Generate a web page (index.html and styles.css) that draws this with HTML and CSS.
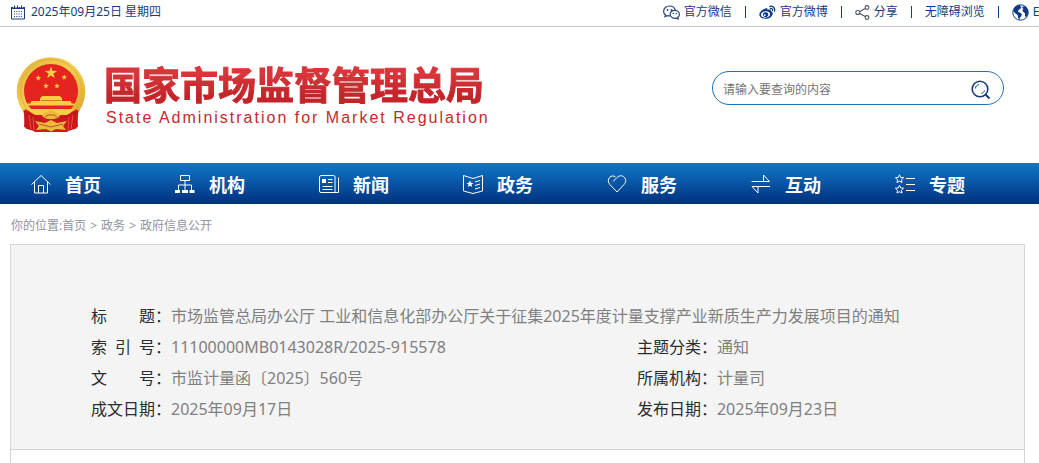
FILE: index.html
```
<!DOCTYPE html>
<html lang="zh-CN">
<head>
<meta charset="utf-8">
<title>国家市场监督管理总局</title>
<link rel="stylesheet" href="styles.css">
</head>
<body>
<div class="topbar">
  <div class="date">
    <svg width="14" height="15" viewBox="0 0 14 15" fill="none" stroke="#1c3c78"><path d="M.5 3.500v10.500h13V3.500M3.500 .5v3.500M6.500 .5v3.500M10.500 .5v3.500"/><path d="M0 2.500h2.500M4.500 2.500h1M7.500 2.500h2M11.500 2.500H14M0 3.500h14"/><path d="M3 6.500h9M3 9h9M3 11.500h9" stroke-dasharray="1 1.300"/></svg>
    <span>2025年09月25日 星期四</span>
  </div>
  <ul class="toplinks">
    <li><a href="#"><svg width="17" height="15" viewBox="0 0 17 15" fill="none" stroke="#24457f" stroke-width="1.200"><path d="M7 10.800c-1 .2-2 .1-3-.2L2 11.600l.4-1.800C1.200 9 .6 7.700.6 6.200.600 3.300 3.300 1 6.500 1c3 0 5.400 1.900 5.800 4.300"/><path d="M11.700 5.300c2.600 0 4.700 1.800 4.700 4 0 1.300-.6 2.300-1.600 3l.4 1.600-1.700-.8c-3.300.9-6.400-1-6.400-3.800 0-2.200 2-4 4.600-4z"/><g fill="#24457f" stroke="none"><circle cx="4.500" cy="5" r=".9"/><circle cx="8.500" cy="5" r=".9"/><circle cx="10.300" cy="8.500" r=".8"/><circle cx="13.300" cy="8.500" r=".8"/></g></svg>官方微信</a></li>
    <li><a href="#"><svg width="17" height="15" viewBox="0 0 17 15"><path fill="#0c3b83" fill-rule="evenodd" d="M6.500 3.500c1.300-.5 2.300 0 2 1.300 1.900-.7 3.700-.4 3.200 1.300 1.300.4 2 1.300 2 2.300 0 2.800-3.200 5.400-7.200 5.400C3 13.800.3 12 .3 9.500.300 7.200 3.500 4.300 6.500 3.500zM6.400 6.300C3.700 6.500 1.800 8 2 9.900s2.200 2.900 4.700 2.700c2.600-.2 4.600-1.800 4.400-3.700S9 6.100 6.400 6.300zM6.300 7.200c1.900-.2 3.200.9 3 2.500s-1.600 2.500-3.200 2.300c-1.700-.2-2.700-1.400-2.300-2.800.3-1.200 1.300-1.900 2.500-2z"/><circle cx="5.600" cy="10.200" r="1" fill="#fff"/><path d="M10.800 1.300c3-.7 5.600 1.800 4.700 4.900M11.400 3.500c1.500-.3 2.500.7 2.100 2.100" fill="none" stroke="#0c3b83" stroke-width="1.300" stroke-linecap="round"/></svg>官方微博</a></li>
    <li><a href="#"><svg width="15" height="15" viewBox="0 0 15 15" fill="none" stroke="#4d545f" stroke-width="1.100"><circle cx="2.800" cy="7.500" r="2"/><circle cx="12" cy="2.500" r="1.900"/><circle cx="12" cy="12.500" r="1.900"/><path d="M4.700 6.500l5.500-2.900M4.700 8.500l5.500 2.900"/></svg>分享</a></li>
    <li><a href="#">无障碍浏览</a></li>
    <li><a href="#"><svg width="17" height="17" viewBox="0 0 17 17"><circle cx="8.500" cy="8.500" r="7.700" fill="#fff" stroke="#0c3b83"/><path fill="#0c3b83" d="M2 4.300L5 1.500l3.500-.7-.5 1.500 1.500.5-.8 1.800-2 1.200-.8 2 2 .6 2 1.600-.8 2.500-1.200 1-.3 2.500-1.400-1.800-.4-3L3.600 9.600 1.400 7.500zM10.500 2.500l3-.2 2.300 3.200.5 3-.8 3.200-1.500 1.500-1.100-1.800.2-2.200-1.800-1.200-1-1.700L11.500 5l-1.200-1z"/></svg>English</a></li>
  </ul>
</div>

<header class="header">
  <a class="brand" href="#">
    <svg width="70" height="76" viewBox="0 0 70 76">
      <defs><linearGradient id="gold" x1="0" y1="0" x2="1" y2="1"><stop offset="0" stop-color="#dfae3a"/><stop offset=".45" stop-color="#f5d050"/><stop offset="1" stop-color="#d99f2b"/></linearGradient></defs>
      <circle cx="35" cy="34.500" r="34.300" fill="url(#gold)"/>
      <circle cx="35" cy="33" r="30.500" fill="none" stroke="#e2b13c"/>
      <circle cx="35" cy="34" r="27" fill="#e52420"/>
      <path fill="#cf1c20" d="M9 52l11 6h30l11-6 1 18-8 2-3 3H19l-3-3-8-2z"/>
      <g fill="#f6cf45">
        <path id="star" d="M35 9.500l1.500 4.300 4.600.1-3.700 2.800 1.400 4.400-3.800-2.600-3.800 2.600 1.400-4.400-3.700-2.800 4.600-.1z"/>
        <use href="#star" transform="translate(5.800 13.500) scale(.47)"/>
        <use href="#star" transform="translate(31.800 12.800) scale(.47)"/>
        <use href="#star" transform="translate(13.500 21.500) scale(.47)"/>
        <use href="#star" transform="translate(24.500 21.500) scale(.47)"/>
        <path d="M26 39h18l1.500 2H46v3h8.500l1.500 3h-42l1.500-3H24v-3h.5z"/>
        <path d="M11.500 46.500h47v2h-47z"/>
        <path d="M11.500 52h47L52 58H18z"/>
      </g>
      <path d="M25 43.500h20" stroke="#d87625" fill="none"/>
      <path fill="#c9181c" d="M7.500 53l17 7 3 5-6 10-7-2-5-1.500zM62.500 53l-17 7-3 5 6 10 7-2 5-1.500z"/>
      <path fill="#edbb3b" d="M31 55l3-1.500h2l3 1.500 3 1 2 3-3 2-3 1h-6l-3-1-3-2 2-3zM19 64l10 2 6-3 6 3 10-2-4 5 3 4-10-1-5 2.500-5-2.500-10 1 3-4z"/>
      <path d="M29 60l3-2h6l3 2M23 67l12 3 12-3" stroke="#bd5823" fill="none"/>
      <path d="M13 58l2 14M17 60l1 13M57 58l-2 14M53 60l-1 13" stroke="#f04a38" fill="none"/>
    </svg>
    <span class="names">
      <span class="name-cn">国家市场监督管理总局</span>
      <span class="name-en">State Administration for Market Regulation</span>
    </span>
  </a>
  <form class="search">
    <input class="search-input" type="text" aria-label="搜索" placeholder="请输入要查询的内容">
    <button class="search-btn" type="button" aria-label="查询"><svg width="20" height="20" viewBox="0 0 20 20" fill="none" stroke="#143d80"><circle cx="9" cy="9" r="7.800" stroke-width="1.600"/><path d="M14.500 14.500l4 4" stroke-width="2"/><path d="M4.300 8.500c.3-2 1.700-3.500 3.700-4M13.500 10.500c-.5 1.500-1.500 2.500-3 3"/></svg></button>
  </form>
</header>

<nav class="nav">
  <a href="#"><svg width="20" height="20" viewBox="0 0 20 20"><path d="M.5 10.500l9.500-9 9.500 9M3.500 8v11h13V8M7.500 19v-7.500h5V19"/></svg>首页</a>
  <a href="#"><svg width="20" height="20" viewBox="0 0 20 20"><path d="M5.500 1.500h9v5h-9zM10 6.500v4.500M3.500 16v-5h13v5M10 11v5"/><path class="solid" d="M0 16h5v3H0zM7 16h6v3H7zM14.500 16h5v3h-5z"/></svg>机构</a>
  <a href="#"><svg width="20" height="20" viewBox="0 0 20 20"><path d="M2.500 1.500h12q1.500 0 1.500 1.500v15.500H2q-1.500 0-1.500-1.500V3q0-1.500 2-1.500zM16 18.500h3.500v-15M9 5.500h4.500M9 8.500h4.500M3.500 12.500h10M3.500 15.500h10"/><path class="solid" d="M3 5h4v4H3z"/></svg>新闻</a>
  <a href="#"><svg width="20" height="20" viewBox="0 0 20 20"><path d="M.5 1.500l9.500 3 9.500-3V17L10 19.500.5 17zM12 8l5-1.500M12 11.500l5-1.500M12 15l5-1.500"/><path class="solid" d="M7 6.500l1 2.300 2.500.2-2 1.500.7 2.500L7 11.700 4.800 13l.7-2.500-2-1.500 2.500-.2z"/></svg>政务</a>
  <a href="#"><svg width="20" height="20" viewBox="0 0 20 20"><path d="M6 7.500l4-4c2.200-2.200 5.300-2.300 7.200-.3 2 2 2 5-.1 7.200L10 18 2.800 10.400C.8 8.300.8 5.200 2.700 3.300c1.700-1.700 4-1.700 5.800-.4"/></svg>服务</a>
  <a href="#"><svg width="20" height="20" viewBox="0 0 20 20"><path d="M.5 7.500h18L12.500 1v6.500M19 12.500H1L7 19v-6.500"/></svg>互动</a>
  <a href="#"><svg width="20" height="20" viewBox="0 0 20 20"><path d="M4.500.8l1.200 2.600 2.900.3-2.100 2 .5 2.800-2.500-1.300L2 8.500l.5-2.800-2.100-2 2.900-.3zM4.500 11.300l1.200 2.600 2.900.3-2.100 2 .5 2.800-2.500-1.300L2 19l.5-2.800-2.100-2 2.900-.3zM11 4.500h9M11 10.500h9M11 16.500h9"/></svg>专题</a>
</nav>

<main class="page">
  <div class="crumbs">你的位置:<a href="#">首页</a><span class="gt">&gt;</span><a href="#">政务</a><span class="gt">&gt;</span><a href="#">政府信息公开</a></div>
  <article class="doc">
    <dl class="meta">
      <div class="row wide"><dt><span class="label">标 题</span>：</dt><dd>市场监管总局办公厅 工业和信息化部办公厅关于征集2025年度计量支撑产业新质生产力发展项目的通知</dd></div>
      <div class="row"><dt><span class="label">索 引 号</span>：</dt><dd>11100000MB0143028R/2025-915578</dd></div>
      <div class="row"><dt><span class="label">主题分类</span>：</dt><dd>通知</dd></div>
      <div class="row"><dt><span class="label">文 号</span>：</dt><dd>市监计量函〔2025〕560号</dd></div>
      <div class="row"><dt><span class="label">所属机构</span>：</dt><dd>计量司</dd></div>
      <div class="row"><dt><span class="label">成文日期</span>：</dt><dd>2025年09月17日</dd></div>
      <div class="row"><dt><span class="label">发布日期</span>：</dt><dd>2025年09月23日</dd></div>
    </dl>
    <div class="doc-body"></div>
  </article>
</main>
</body>
</html>
```
FILE: styles.css
```
* { box-sizing: border-box; }
body {
  margin: 0;
  overflow-x: hidden;
  background: #fff;
  font-family: "Noto Sans", "Noto Sans CJK SC", sans-serif;
  font-size: 12px;
  color: #333;
}
a { color: inherit; text-decoration: none; }
svg { display: block; flex: none; }
ul, dl, dd { margin: 0; padding: 0; list-style: none; }

.topbar {
  display: flex;
  align-items: center;
  height: 27px;
  padding: 0 0 2px 11px;
  overflow: hidden;
  border-bottom: 1px solid #c4c6ca;
  color: #143d80;
  line-height: 22px;
  white-space: nowrap;
}
.date { display: flex; align-items: center; gap: 6px; flex: 0 0 63%; }
.toplinks { display: flex; gap: 13px; margin-left: 4px; }
.toplinks li { display: flex; align-items: center; gap: 13px; }
.toplinks li + li::before { content: ""; width: 1px; height: 12px; background: #143d80; }
.toplinks a { display: flex; align-items: center; gap: 4px; }

.header {
  display: flex;
  align-items: center;
  justify-content: space-between;
  height: 136px;
  padding: 0 35px 0 16px;
}
.brand { display: flex; align-items: center; gap: 18px; }
.names { display: flex; flex-direction: column; white-space: nowrap; }
.name-cn {
  font: bold 38px/44px "Noto Sans CJK SC", sans-serif;
  background: linear-gradient(#d9353a 30%, #c2242a 80%);
  background-clip: text;
  color: transparent;
  -webkit-text-stroke: 1px transparent;
}
.name-en {
  padding: 2px 0 0 2px;
  font: 16px/22px "Liberation Sans", sans-serif;
  letter-spacing: 2px;
  color: #c4292d;
}
.search {
  display: flex;
  align-items: center;
  width: 292px;
  height: 34px;
  margin-bottom: 15px;
  padding: 0 12px 0 10px;
  border: 1px solid #1f72b8;
  border-radius: 17px;
}
.search-input {
  flex: 1;
  min-width: 0;
  padding: 3px 0 0;
  border: 0;
  outline: 0;
  background: none;
  font: inherit;
}
.search-input::placeholder { color: #757575; }
.search-btn { padding: 4px 0 0; border: 0; background: none; }

.nav {
  display: flex;
  height: 41px;
  padding-left: 31px;
  background: linear-gradient(#1078c8, #00307e);
}
.nav a {
  display: flex;
  align-items: center;
  flex: 0 0 144px;
  gap: 14px;
  font-size: 18px;
  font-weight: bold;
  color: #fff;
}
.nav svg { fill: none; stroke: #fff; }
.nav .solid { fill: #fff; stroke: none; }

.page { padding: 0 14px 0 10px; }
.crumbs { height: 40px; padding-left: 1px; line-height: 44px; color: #9194a0; }
.gt { margin: 0 4px; }
.doc { border: 1px solid #d3d5de; border-bottom: 0; }
.meta {
  display: grid;
  grid-template-columns: 64% 36%;
  padding: 56px 80px 24px;
  background: #f4f4f4;
  border-bottom: 1px solid #d3d5de;
  font-size: 16px;
  line-height: 31px;
}
.row { display: flex; white-space: nowrap; }
.wide { grid-column: 1 / -1; }
dt { display: flex; flex: 0 0 80px; color: #2c2c2c; }
.label { width: 64px; text-align: justify; text-align-last: justify; }
dd { color: #808080; }
.doc-body { height: 13px; }
```
